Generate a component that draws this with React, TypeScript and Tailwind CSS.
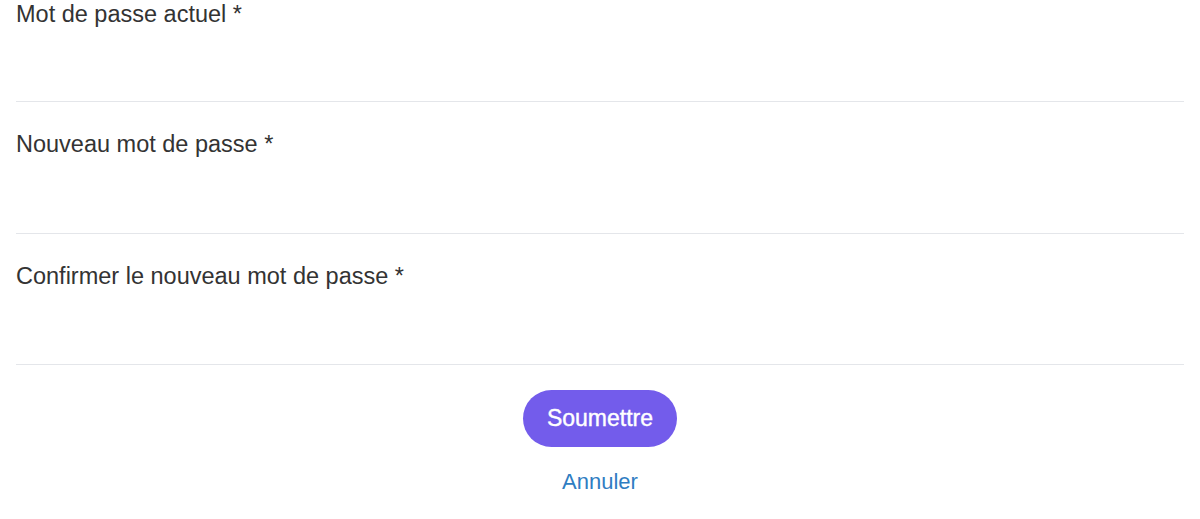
import { FunctionComponent } from "react";

type FieldProps = {
  label: string;
  top: string;
  height: string;
};

const Field: FunctionComponent<FieldProps> = ({ label, top, height }) => {
  return (
    <div className={`flex flex-col border-b border-[#e4e6ea] ${top}`}>
      <label className="text-[23.5px] leading-[28px] text-[#333333]">{label}</label>
      <input type="password" className={`w-full bg-transparent outline-none ${height}`} />
    </div>
  );
};

const App: FunctionComponent = () => {
  return (
    <div className="w-[1200px] h-[519px] bg-white overflow-hidden [font-family:'Liberation_Sans',Arial,sans-serif]">
      <form className="flex flex-col px-4">
        <Field label="Mot de passe actuel *" top="pt-0" height="h-[73px]" />
        <Field label="Nouveau mot de passe *" top="pt-[28px]" height="h-[75px]" />
        <Field label="Confirmer le nouveau mot de passe *" top="pt-[28px]" height="h-[74px]" />
        <div className="flex flex-col items-center pt-[25px]">
          <button
            type="button"
            className="w-[154px] h-[57px] rounded-full bg-[#735ceb] text-white text-[23px] [-webkit-text-stroke:0.4px_white] flex items-center justify-center"
          >
            Soumettre
          </button>
          <a className="mt-[21px] text-[22px] leading-[28px] text-[#2f7dc2] cursor-pointer">
            Annuler
          </a>
        </div>
      </form>
    </div>
  );
};

export default App;
